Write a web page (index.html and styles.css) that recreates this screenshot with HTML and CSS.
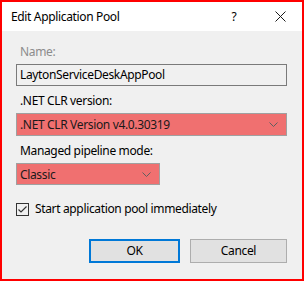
FILE: index.html
```html
<!DOCTYPE html>
<html>
  <head>
    <meta charset="UTF-8" />
    <title>Edit Application Pool</title>
    <link rel="stylesheet" href="styles.css">
  </head>

  <body>
    <div class="dialog">
      <div class="title-bar">
        <div class="title-text">Edit Application Pool</div>
        <div class="title-help">?</div>
        <div class="title-close">
          <svg width="11" height="11" viewBox="0 0 11 11">
            <path d="M0.5 0.5 L10.5 10.5 M10.5 0.5 L0.5 10.5" stroke="#1a1a1a" stroke-width="1" fill="none" />
          </svg>
        </div>
      </div>

      <div class="content">
        <div class="label label-disabled">Name:</div>
        <div class="textbox">LaytonServiceDeskAppPool</div>

        <div class="label label-gap">.NET CLR version:</div>
        <div class="combo combo-wide">
          <span>.NET CLR Version v4.0.30319</span>
          <svg class="chevron" width="9" height="5" viewBox="0 0 9 5">
            <path d="M0.5 0.5 L4.5 4.5 L8.5 0.5" stroke="#606060" stroke-width="1" fill="none" />
          </svg>
        </div>

        <div class="label label-gap">Managed pipeline mode:</div>
        <div class="combo combo-narrow">
          <span>Classic</span>
          <svg class="chevron" width="9" height="5" viewBox="0 0 9 5">
            <path d="M0.5 0.5 L4.5 4.5 L8.5 0.5" stroke="#606060" stroke-width="1" fill="none" />
          </svg>
        </div>

        <div class="check-row">
          <div class="checkbox">
            <svg width="11" height="11" viewBox="0 0 11 11">
              <path d="M1.5 5.5 L4 8 L9.5 2.5" stroke="#333" stroke-width="1.2" fill="none" />
            </svg>
          </div>
          <div class="check-label">Start application pool immediately</div>
        </div>

        <div class="buttons">
          <div class="btn btn-default">OK</div>
          <div class="btn">Cancel</div>
        </div>
      </div>
    </div>
  </body>
</html>
```

FILE: styles.css
```css
body {
  margin: 0;
  padding: 0;
  font-family: "Noto Sans", "Open Sans", sans-serif;
  font-size: 12px;
  letter-spacing: -0.35px;
  color: #000;
}

.dialog {
  width: 304px;
  height: 281px;
  box-sizing: border-box;
  border: 2px solid #ff0000;
  display: flex;
  flex-direction: column;
  background: #f0f0f0;
}

.title-bar {
  height: 29px;
  background: #fff;
  display: flex;
  align-items: center;
  padding-left: 9px;
}

.title-text {
  flex: 1;
  line-height: 16px;
}

.title-help {
  width: 12px;
  margin-right: 35px;
  text-align: center;
  line-height: 16px;
}

.title-close {
  width: 11px;
  height: 11px;
  margin-right: 16px;
  display: flex;
}

.content {
  flex: 1;
  padding: 13px 15px 0 14px;
}

.label {
  line-height: 16px;
  padding-left: 4px;
  margin-bottom: 4px;
}

.label-disabled {
  color: #8c8c8c;
}

.label-gap {
  margin-top: 7px;
}

.textbox {
  height: 22px;
  box-sizing: border-box;
  border: 1px solid #7a7a7a;
  background: #f0f0f0;
  padding-left: 3px;
  line-height: 20px;
}

.combo {
  height: 23px;
  box-sizing: border-box;
  border: 1px solid #a0a0a0;
  background: #f07070;
  display: flex;
  align-items: center;
  justify-content: space-between;
  padding: 0 8px 0 3px;
  color: #1a1a1a;
}

.combo-narrow {
  width: 144px;
  height: 22px;
}

.check-row {
  display: flex;
  align-items: center;
  margin-top: 16px;
  height: 16px;
}

.checkbox {
  width: 13px;
  height: 13px;
  box-sizing: border-box;
  border: 1px solid #333;
  background: #f0f0f0;
  display: flex;
  align-items: center;
  justify-content: center;
}

.check-label {
  margin-left: 6px;
  line-height: 16px;
}

.buttons {
  display: flex;
  justify-content: flex-end;
  gap: 10px;
  margin-top: 22px;
}

.btn {
  width: 97px;
  height: 24px;
  box-sizing: border-box;
  border: 1px solid #adadad;
  background: #e1e1e1;
  text-align: center;
  line-height: 22px;
}

.btn-default {
  width: 91px;
  border: 2px solid #0078d7;
  line-height: 20px;
}
```
